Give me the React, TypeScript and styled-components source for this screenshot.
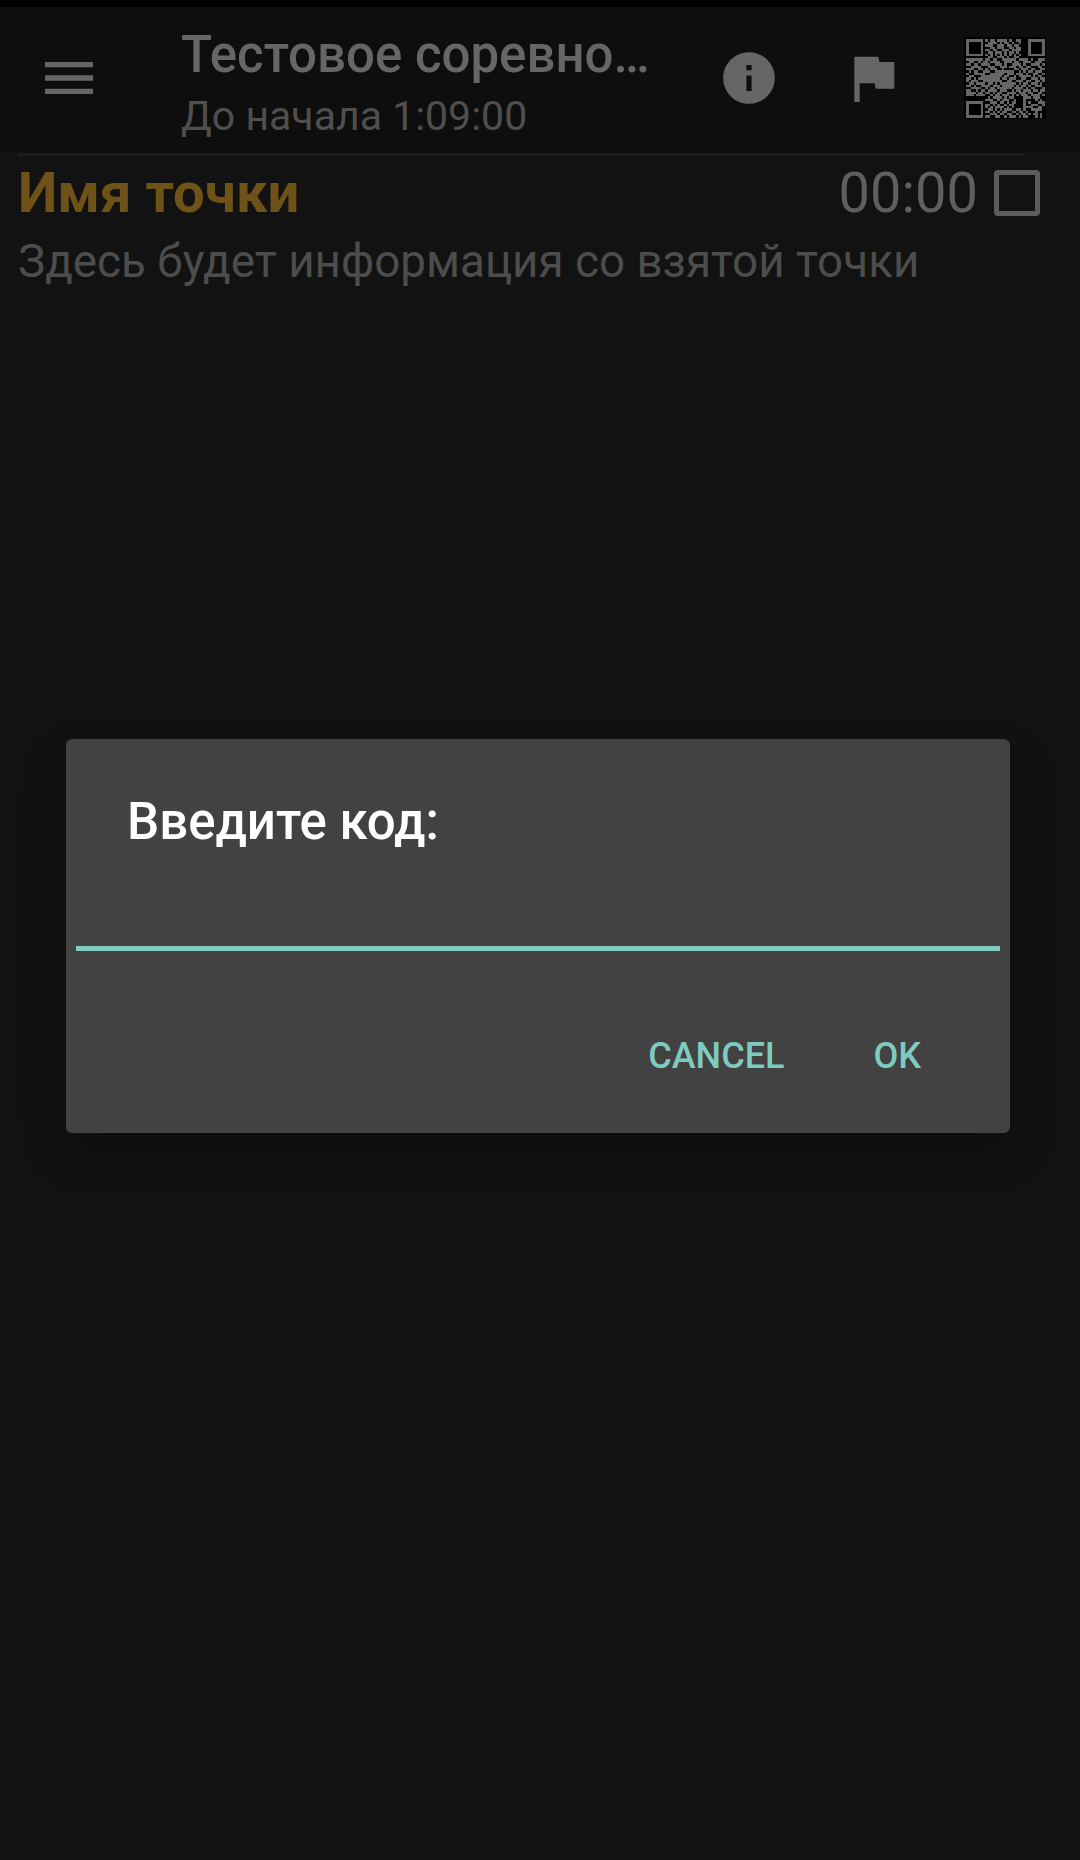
import * as React from 'react'
import styled, { createGlobalStyle } from 'styled-components'

const GlobalStyle = createGlobalStyle`
  html, body {
    margin: 0;
    padding: 0;
    background: #121212;
  }
  * {
    box-sizing: border-box;
  }
`

const Screen = styled.div`
  position: relative;
  width: 1080px;
  height: 1860px;
  overflow: hidden;
  background: #121212;
  font-family: Roboto, 'Noto Sans', sans-serif;
`

const StatusBar = styled.div`
  height: 7px;
  background: #000;
`

const Toolbar = styled.header`
  display: flex;
  align-items: center;
  height: 146px;
  padding-bottom: 4px;
  background: #0e0e0e;
`

const MenuSlot = styled.div`
  display: flex;
  width: 181px;
  padding-left: 37px;
`

const TitleBlock = styled.div`
  display: flex;
  flex-direction: column;
  width: 479px;
  padding-top: 12px;
`

const Title = styled.div`
  font-size: 51px;
  line-height: 62px;
  font-weight: 500;
  color: #666;
  white-space: nowrap;
`

const Subtitle = styled.div`
  margin-top: 2px;
  font-size: 41px;
  line-height: 56px;
  color: #4f4f4f;
`

const ToolIcon = styled.svg<{ $size: number; $gap: number }>`
  width: ${p => p.$size}px;
  height: ${p => p.$size}px;
  margin-left: ${p => p.$gap}px;
  fill: #666;
  flex: none;
`

const QrCode = styled.svg`
  width: 82px;
  height: 82px;
  margin-left: 59px;
  flex: none;
  background: #000;
  fill: #666;
`

const Divider = styled.div`
  height: 3px;
  margin: 0 55px 0 18px;
  background: #1c1c1c;
`

const PointRow = styled.div`
  display: flex;
  align-items: center;
  justify-content: space-between;
  height: 71px;
  padding: 3px 40px 0 18px;
`

const PointName = styled.div`
  font-size: 56.2px;
  font-weight: 700;
  color: #6f5218;
`

const PointStatus = styled.div`
  display: flex;
  align-items: center;
  gap: 16px;
`

const PointTime = styled.div`
  font-size: 56px;
  color: #5f5f5f;
`

const CheckBox = styled.div`
  width: 46px;
  height: 46px;
  border: 5px solid #5c5c5c;
  border-radius: 4px;
`

const PointInfo = styled.div`
  padding: 6px 18px;
  font-size: 45.8px;
  line-height: 58px;
  color: #4d4d4d;
`

const Dialog = styled.div`
  position: absolute;
  top: 739px;
  left: 66px;
  width: 944px;
  height: 394px;
  display: flex;
  flex-direction: column;
  padding: 0 10px;
  background: #424242;
  border-radius: 6px;
  box-shadow: 0 20px 44px rgba(0, 0, 0, 0.22);
`

const DialogTitle = styled.div`
  padding: 51px 0 0 51px;
  height: 207px;
  font-size: 51px;
  line-height: 64px;
  font-weight: 500;
  color: #fff;
`

const DialogInput = styled.div`
  height: 5px;
  background: #7ecbbf;
`

const DialogActions = styled.div`
  display: flex;
  justify-content: flex-end;
  gap: 89px;
  padding: 83px 79px 0 0;
`

const ActionButton = styled.div`
  font-size: 36px;
  line-height: 44px;
  font-weight: 500;
  color: #7ecbbf;
`

const qrRows = [
  '000000001011011110100110000000000',
  '000000000111101011010010000000000',
  '000000001110011101101100000000000',
  '000000000011011100110110000000000',
  '000000001101100111011110000000000',
  '000000000110111010110100000000000',
  '000000001010101010101010000000000',
  '000000000110011101001100000000000',
  '111111101101100111111011110100111',
  '011001011011110011101100111001110',
  '110110111100111010011110100111101',
  '001111000111001110111011011000110',
  '111001101011100100001101110110011',
  '010110011100111111110010101101110',
  '100111110011111101110111010011001',
  '011000111111111011001011111010110',
  '110101111111110110111001100111011',
  '101110011111111001100111011001101',
  '011011110110101111111010110111010',
  '110100111101110111110101101001110',
  '001111001011011111101111010110001',
  '110010110111101110010110111011011',
  '111101101101011001111011101100110',
  '111011110010110111010101110111101',
  '000000000101111010110000000101100',
  '000000001110010111001000000011010',
  '000000000011101101011000000010111',
  '000000001101010010110000000101001',
  '000000001010111101010000000010110',
  '000000000110101011100110100111110',
  '000000001101010110011011010001000',
  '000000000011101101100101101011010',
  '000000001100110010111010110001010'
]

const finder = (x: number, y: number) =>
  `M${x} ${y}h7v7h-7zM${x + 1} ${y + 1}v5h5v-5z`

const qrPath = [
  ...qrRows.flatMap((row, y) =>
    row.split('').map((cell, x) => (cell === '1' ? `M${x} ${y}h1v1h-1z` : ''))
  ),
  finder(0, 0),
  finder(26, 0),
  finder(0, 26),
  'M24 24h5v5h-5zM25 25v3h3v-3zM26 26h1v1h-1z'
].join('')

export default function App() {
  return (
    <Screen>
      <GlobalStyle />
      <StatusBar />
      <Toolbar>
        <MenuSlot>
          <ToolIcon viewBox="0 0 24 24" $size={64} $gap={0}>
            <path d="M3 18h18v-2H3v2zm0-5h18v-2H3v2zm0-7v2h18V6H3z" />
          </ToolIcon>
        </MenuSlot>
        <TitleBlock>
          <Title>Тестовое соревно…</Title>
          <Subtitle>До начала 1:09:00</Subtitle>
        </TitleBlock>
        <ToolIcon viewBox="0 0 24 24" $size={62} $gap={58}>
          <path d="M12 2C6.48 2 2 6.48 2 12s4.48 10 10 10 10-4.48 10-10S17.52 2 12 2zm1 15h-2v-6h2v6zm0-8h-2V7h2v2z" />
        </ToolIcon>
        <ToolIcon viewBox="0 0 24 24" $size={64} $gap={61}>
          <path d="M14.4 6L14 4H5v17h2v-7h5.6l.4 2h7V6z" />
        </ToolIcon>
        <QrCode viewBox="-1 -1 34.5 34.5" shapeRendering="crispEdges">
          <path fillRule="evenodd" d={qrPath} />
        </QrCode>
      </Toolbar>
      <Divider />
      <PointRow>
        <PointName>Имя точки</PointName>
        <PointStatus>
          <PointTime>00:00</PointTime>
          <CheckBox />
        </PointStatus>
      </PointRow>
      <PointInfo>Здесь будет информация со взятой точки</PointInfo>
      <Dialog>
        <DialogTitle>Введите код:</DialogTitle>
        <DialogInput />
        <DialogActions>
          <ActionButton>CANCEL</ActionButton>
          <ActionButton>OK</ActionButton>
        </DialogActions>
      </Dialog>
    </Screen>
  )
}
